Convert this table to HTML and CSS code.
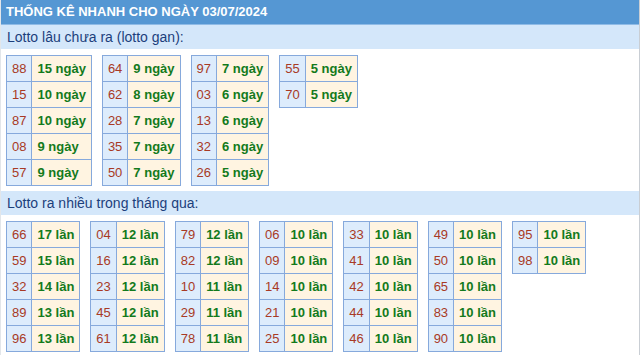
FILE: index.html
```html
<!DOCTYPE html>
<html lang="vi">
<head>
<meta charset="utf-8">
<title>Thống kê nhanh</title>
<link rel="stylesheet" href="styles.css">
</head>
<body>
<div class="wrap">
  <div class="title">THỐNG KÊ NHANH CHO NGÀY 03/07/2024</div>
  <div class="sec">Lotto lâu chưa ra (lotto gan):</div>
  <div class="grid">
    <table><tr><td class="n">88</td><td class="v">15 ngày</td></tr><tr><td class="n">15</td><td class="v">10 ngày</td></tr><tr><td class="n">87</td><td class="v">10 ngày</td></tr><tr><td class="n">08</td><td class="v">9 ngày</td></tr><tr><td class="n">57</td><td class="v">9 ngày</td></tr></table>
    <table><tr><td class="n">64</td><td class="v">9 ngày</td></tr><tr><td class="n">62</td><td class="v">8 ngày</td></tr><tr><td class="n">28</td><td class="v">7 ngày</td></tr><tr><td class="n">35</td><td class="v">7 ngày</td></tr><tr><td class="n">50</td><td class="v">7 ngày</td></tr></table>
    <table><tr><td class="n">97</td><td class="v">7 ngày</td></tr><tr><td class="n">03</td><td class="v">6 ngày</td></tr><tr><td class="n">13</td><td class="v">6 ngày</td></tr><tr><td class="n">32</td><td class="v">6 ngày</td></tr><tr><td class="n">26</td><td class="v">5 ngày</td></tr></table>
    <table><tr><td class="n">55</td><td class="v">5 ngày</td></tr><tr><td class="n">70</td><td class="v">5 ngày</td></tr></table>
  </div>
  <div class="sec">Lotto ra nhiều trong tháng qua:</div>
  <div class="grid">
    <table><tr><td class="n">66</td><td class="v">17 lần</td></tr><tr><td class="n">59</td><td class="v">15 lần</td></tr><tr><td class="n">32</td><td class="v">14 lần</td></tr><tr><td class="n">89</td><td class="v">13 lần</td></tr><tr><td class="n">96</td><td class="v">13 lần</td></tr></table>
    <table><tr><td class="n">04</td><td class="v">12 lần</td></tr><tr><td class="n">16</td><td class="v">12 lần</td></tr><tr><td class="n">23</td><td class="v">12 lần</td></tr><tr><td class="n">45</td><td class="v">12 lần</td></tr><tr><td class="n">61</td><td class="v">12 lần</td></tr></table>
    <table><tr><td class="n">79</td><td class="v">12 lần</td></tr><tr><td class="n">82</td><td class="v">12 lần</td></tr><tr><td class="n">10</td><td class="v">11 lần</td></tr><tr><td class="n">29</td><td class="v">11 lần</td></tr><tr><td class="n">78</td><td class="v">11 lần</td></tr></table>
    <table><tr><td class="n">06</td><td class="v">10 lần</td></tr><tr><td class="n">09</td><td class="v">10 lần</td></tr><tr><td class="n">14</td><td class="v">10 lần</td></tr><tr><td class="n">21</td><td class="v">10 lần</td></tr><tr><td class="n">25</td><td class="v">10 lần</td></tr></table>
    <table><tr><td class="n">33</td><td class="v">10 lần</td></tr><tr><td class="n">41</td><td class="v">10 lần</td></tr><tr><td class="n">42</td><td class="v">10 lần</td></tr><tr><td class="n">44</td><td class="v">10 lần</td></tr><tr><td class="n">46</td><td class="v">10 lần</td></tr></table>
    <table><tr><td class="n">49</td><td class="v">10 lần</td></tr><tr><td class="n">50</td><td class="v">10 lần</td></tr><tr><td class="n">65</td><td class="v">10 lần</td></tr><tr><td class="n">83</td><td class="v">10 lần</td></tr><tr><td class="n">90</td><td class="v">10 lần</td></tr></table>
    <table><tr><td class="n">95</td><td class="v">10 lần</td></tr><tr><td class="n">98</td><td class="v">10 lần</td></tr></table>
  </div>
</div>
</body>
</html>
```
FILE: styles.css
```css
html, body { margin: 0; padding: 0; background: #fff; }
body { font-family: "Liberation Sans", Arial, sans-serif; }
.wrap {
  width: 640px;
  box-sizing: border-box;
  border-left: 1px solid #e2e6ea;
  border-right: 1px solid #c9ced4;
  min-height: 355px;
}
.title {
  background: #5597d3;
  color: #fff;
  font-weight: bold;
  font-size: 13px;
  height: 24px;
  line-height: 24px;
  padding-left: 5px;
  border-bottom: 1px solid #8fbbe6;
}
.sec {
  background: #d4e7fa;
  color: #1c3f7c;
  font-size: 14px;
  height: 24px;
  line-height: 24px;
  padding-left: 6px;
}
.grid {
  display: flex;
  flex-wrap: wrap;
  align-items: flex-start;
  gap: 10px;
  padding: 6px 5px 5px;
}
table { border-collapse: collapse; }
td {
  border: 1px solid #86a9dc;
  height: 25px;
  padding: 0 5px;
  font-size: 13px;
  white-space: nowrap;
}
td.n { background: #ddecfc; color: #a83a25; }
td.v { background: #fff4e1; color: #137a1c; font-weight: bold; }
```
